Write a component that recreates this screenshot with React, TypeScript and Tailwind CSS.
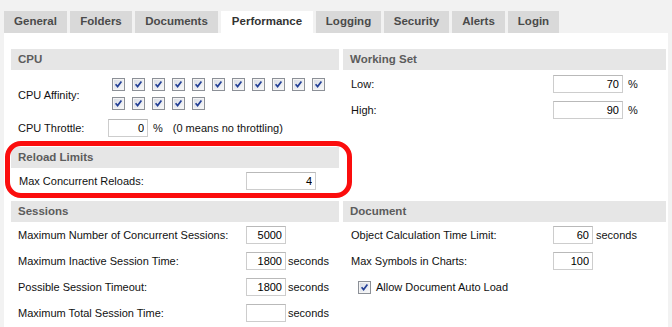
import React from "react";

const tabs = [
    { name: "General", w: "w-[63px]" },
    { name: "Folders", w: "w-[62px]" },
    { name: "Documents", w: "w-[83px]" },
    { name: "Performance", w: "w-[92px]", active: true },
    { name: "Logging", w: "w-[65px]" },
    { name: "Security", w: "w-[65px]" },
    { name: "Alerts", w: "w-[53px]" },
    { name: "Login", w: "w-[51px]" },
];

function Check() {
    return (
        <svg width="13" height="13" viewBox="0 0 13 13" className="block">
            <defs>
                <linearGradient id="cbfill" x1="0" y1="0" x2="1" y2="1">
                    <stop offset="0" stopColor="#d9dde5" />
                    <stop offset="1" stopColor="#f6f7f9" />
                </linearGradient>
            </defs>
            <rect x="0.5" y="0.5" width="12" height="12" fill="#f4f4f4" stroke="#8c9097" />
            <rect x="2" y="2" width="9" height="9" fill="url(#cbfill)" />
            <path d="M3.6 6.3 L5.6 8.6 L9.4 3.6" stroke="#233f96" strokeWidth="1.7" fill="none" />
        </svg>
    );
}

function Field({ value, w = "w-[40px]" }: { value: string; w?: string }) {
    return (
        <input
            readOnly
            value={value}
            className={`${w} h-[18px] border border-[#cdcdcd] border-t-[#b9b9b9] bg-white text-right pr-[3px] text-[11px] text-black outline-none`}
        />
    );
}

function Header({ title }: { title: string }) {
    return (
        <div className="h-[21px] bg-[#e6e6e6] pl-[7px] flex items-center text-[11.5px] font-bold text-[#5c5c5c]">
            {title}
        </div>
    );
}

function Row({ label, lw, children }: { label: string; lw: string; children: React.ReactNode }) {
    return (
        <div className="flex items-center h-[18px]">
            <span className={`${lw} shrink-0`}>{label}</span>
            {children}
        </div>
    );
}

export default function App() {
    return (
        <div className="relative w-[672px] h-[327px] overflow-hidden bg-[#f2f2f2] pt-[11px] px-[4px] font-['Liberation_Sans',Arial,sans-serif] text-[11px] text-[#111]">
            {/* Tabs */}
            <div className="flex gap-[3px] h-[22px]">
                {tabs.map((t) => (
                    <div
                        key={t.name}
                        className={`${t.w} h-[22px] flex items-center justify-center text-[11.5px] font-bold ${
                            t.active ? "bg-white text-[#333]" : "bg-[#d9d9d9] text-[#4a4a4a]"
                        }`}
                    >
                        {t.name}
                    </div>
                ))}
            </div>

            {/* Panel */}
            <div className="w-[664px] h-[300px] bg-white pt-[16px] pl-[7px] pr-[2px]">
                <div className="grid grid-cols-[328px_323px] gap-x-[4px] gap-y-[11px]">
                    {/* Left column top */}
                    <div>
                        <Header title="CPU" />
                        <div className="pl-[7px] pt-[8px]">
                            <div className="flex items-center">
                                <span className="w-[94px] shrink-0 pt-[3px]">CPU Affinity:</span>
                                <div className="grid grid-cols-[repeat(11,13px)] gap-x-[7px] gap-y-[6px]">
                                    {Array.from({ length: 16 }).map((_, i) => (
                                        <Check key={i} />
                                    ))}
                                </div>
                            </div>
                            <div className="flex items-center h-[18px] mt-[9px]">
                                <span className="w-[90px] shrink-0">CPU Throttle:</span>
                                <Field value="0" />
                                <span className="ml-[5px]">%</span>
                                <span className="ml-[10px]">(0 means no throttling)</span>
                            </div>
                        </div>
                        <div className="mt-[10px]">
                            <Header title="Reload Limits" />
                            <div className="pl-[8px] pt-[4px]">
                                <Row label="Max Concurrent Reloads:" lw="w-[227px]">
                                    <Field value="4" w="w-[70px]" />
                                </Row>
                            </div>
                        </div>
                    </div>

                    {/* Right column top */}
                    <div>
                        <Header title="Working Set" />
                        <div className="pl-[8px] pt-[5px] flex flex-col gap-[8px]">
                            <Row label="Low:" lw="w-[202px]">
                                <Field value="70" w="w-[70px]" />
                                <span className="ml-[5px]">%</span>
                            </Row>
                            <Row label="High:" lw="w-[202px]">
                                <Field value="90" w="w-[70px]" />
                                <span className="ml-[5px]">%</span>
                            </Row>
                        </div>
                    </div>

                    {/* Sessions */}
                    <div>
                        <Header title="Sessions" />
                        <div className="pl-[7px] pt-[4px] flex flex-col gap-[8px]">
                            <Row label="Maximum Number of Concurrent Sessions:" lw="w-[228px]">
                                <Field value="5000" />
                            </Row>
                            <Row label="Maximum Inactive Session Time:" lw="w-[228px]">
                                <Field value="1800" />
                                <span className="ml-[2px]">seconds</span>
                            </Row>
                            <Row label="Possible Session Timeout:" lw="w-[228px]">
                                <Field value="1800" />
                                <span className="ml-[2px]">seconds</span>
                            </Row>
                            <Row label="Maximum Total Session Time:" lw="w-[228px]">
                                <Field value="" />
                                <span className="ml-[2px]">seconds</span>
                            </Row>
                        </div>
                    </div>

                    {/* Document */}
                    <div>
                        <Header title="Document" />
                        <div className="pl-[8px] pt-[4px] flex flex-col gap-[8px]">
                            <Row label="Object Calculation Time Limit:" lw="w-[202px]">
                                <Field value="60" />
                                <span className="ml-[3px]">seconds</span>
                            </Row>
                            <Row label="Max Symbols in Charts:" lw="w-[202px]">
                                <Field value="100" />
                            </Row>
                            <div className="flex items-center h-[18px] pl-[7px] gap-[5px]">
                                <Check />
                                <span>Allow Document Auto Load</span>
                            </div>
                        </div>
                    </div>
                </div>
            </div>

            {/* Red annotation outline */}
            <div className="absolute left-[5px] top-[141px] w-[347px] h-[57px] border-[5px] border-[#fb0d0d] rounded-[16px] pointer-events-none" />
        </div>
    );
}
